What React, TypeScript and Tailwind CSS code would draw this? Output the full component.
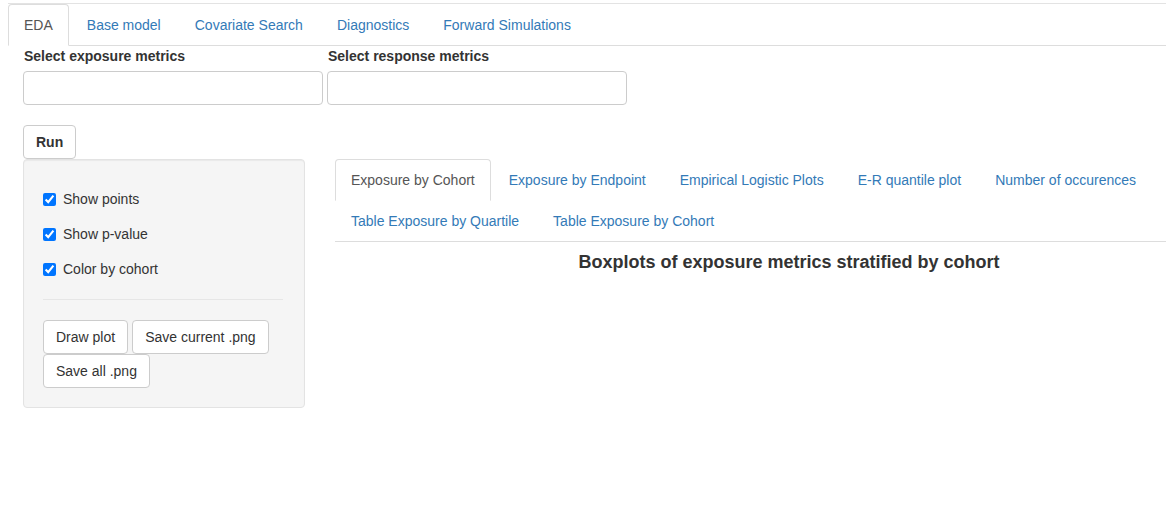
import React from 'react'

const mainTabs = ['EDA', 'Base model', 'Covariate Search', 'Diagnostics', 'Forward Simulations']
const plotTabs = [
  'Exposure by Cohort',
  'Exposure by Endpoint',
  'Empirical Logistic Plots',
  'E-R quantile plot',
  'Number of occurences',
  'Table Exposure by Quartile',
  'Table Exposure by Cohort',
]
const options = ['Show points', 'Show p-value', 'Color by cohort']

function Tab({ label, active }: { label: string; active?: boolean }) {
  return (
    <li className="-mb-px mr-[2px]">
      <span
        className={`block px-[15px] py-[10px] leading-5 border rounded-t-[4px] ${
          active ? 'border-[#ddd] border-b-transparent bg-white text-[#555]' : 'border-transparent text-[#337ab7]'
        }`}
      >
        {label}
      </span>
    </li>
  )
}

function Btn({ children, bold }: { children: React.ReactNode; bold?: boolean }) {
  return (
    <button
      className={`h-[34px] px-3 border border-[#ccc] rounded-[4px] bg-white text-[#333] leading-5 ${bold ? 'font-bold' : ''}`}
    >
      {children}
    </button>
  )
}

export default function App() {
  return (
    <div className="w-[1166px] h-[518px] bg-white text-[14px] text-[#333] overflow-hidden" style={{ fontFamily: '"Liberation Sans", Arial, sans-serif' }}>
      <div className="pt-[3px] pl-2">
        <div className="h-px bg-[#e3e3e3]" />
        <ul className="flex border-b border-[#ddd]">
          {mainTabs.map((t, i) => (
            <Tab key={t} label={t} active={i === 0} />
          ))}
        </ul>

        <div className="pl-[15px]">
          <div className="flex gap-1">
            <div className="w-[300px]">
              <label className="block font-bold leading-5 mb-[5px] pl-px">Select exposure metrics</label>
              <div className="h-[34px] border border-[#ccc] rounded-[4px] bg-white" />
            </div>
            <div className="w-[300px]">
              <label className="block font-bold leading-5 mb-[5px] pl-px">Select response metrics</label>
              <div className="h-[34px] border border-[#ccc] rounded-[4px] bg-white" />
            </div>
          </div>

          <div className="mt-5">
            <Btn bold>Run</Btn>
          </div>

          <div className="flex gap-[30px]">
            <div className="w-[282px] shrink-0 self-start bg-[#f5f5f5] border border-[#e3e3e3] rounded-[4px] p-[19px] shadow-[inset_0_1px_1px_rgba(0,0,0,0.05)]">
              <div className="flex flex-col gap-[15px] mt-[10px]">
                {options.map((o) => (
                  <label key={o} className="flex items-center h-5 leading-5">
                    <input type="checkbox" defaultChecked className="w-[13px] h-[13px] m-0 mr-[7px]" />
                    {o}
                  </label>
                ))}
              </div>
              <hr className="mt-5 mb-5 mr-[2px] border-t border-[#e6e6e6]" />
              <div className="flex flex-wrap gap-x-1">
                <Btn>Draw plot</Btn>
                <Btn>Save current .png</Btn>
                <Btn>Save all .png</Btn>
              </div>
            </div>

            <div className="flex-1">
              <ul className="flex flex-wrap border-b border-[#ddd]">
                {plotTabs.map((t, i) => (
                  <Tab key={t} label={t} active={i === 0} />
                ))}
              </ul>
              <h4 className="mt-[10px] pl-[77px] text-center text-[18px] font-bold leading-[20px] text-[#333]">
                Boxplots of exposure metrics stratified by cohort
              </h4>
            </div>
          </div>
        </div>
      </div>
    </div>
  )
}
